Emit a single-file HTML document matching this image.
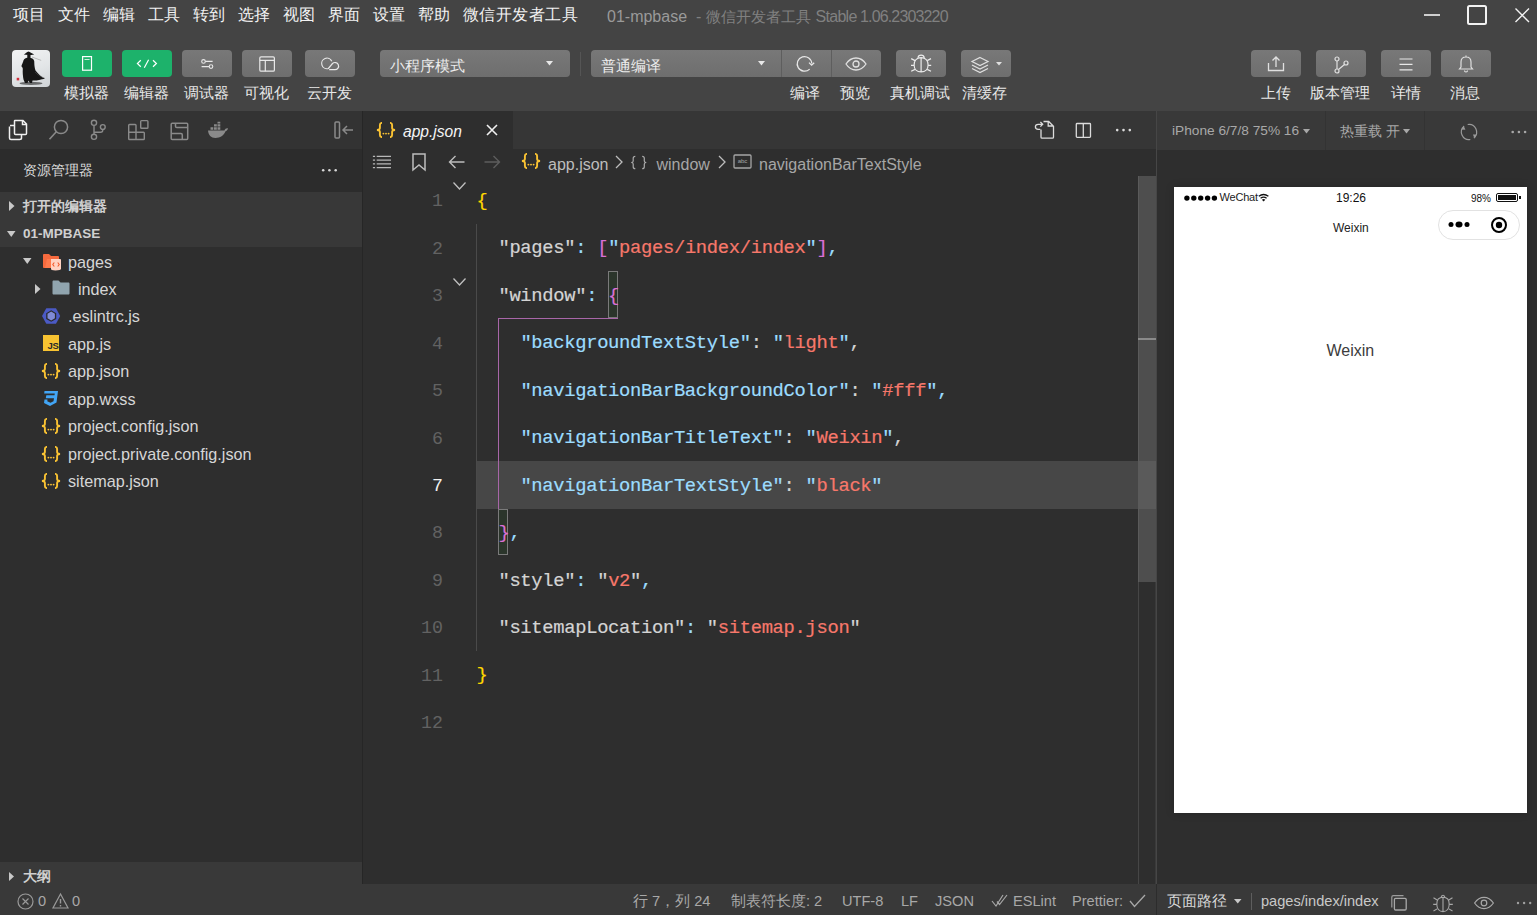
<!DOCTYPE html>
<html><head><meta charset="utf-8">
<style>
*{box-sizing:border-box;margin:0;padding:0}
html,body{width:1537px;height:915px;overflow:hidden;background:#2e2e2e;font-family:"Liberation Sans",sans-serif;color:#ccc}
.a{position:absolute}
svg{position:absolute;overflow:visible}
.menu{left:0;top:0;width:1537px;height:111px;background:#444}
.mi{top:0;line-height:30.5px;font-size:16px;letter-spacing:0.45px;color:#f2f2f2;white-space:nowrap}
.btn{top:50px;height:27px;width:50px;border-radius:4px;background:linear-gradient(#787878,#6e6e6e)}
.g{background:#1db26b}
.lbl{top:83px;line-height:20px;font-size:15.2px;color:#e8e8e8;white-space:nowrap}
.side{left:0;top:111px;width:362px;height:773px;background:#2e2e2e}
.status{left:0;top:884px;width:1537px;height:31px;background:#393939}
.editor{left:363px;top:111px;width:793px;height:773px;background:#2e2e2e}
.sim{left:1157px;top:111px;width:380px;height:773px;background:#2f2f2f}
.code{left:476.5px;padding-top:1.7px;font-family:"Liberation Mono",monospace;font-size:18.8px;letter-spacing:-0.304px;-webkit-text-stroke:0.2px currentColor;line-height:47.45px;height:47.45px;white-space:pre;color:#d4d4d4}
.ln{left:400px;padding-top:2px;width:43px;text-align:right;font-family:"Liberation Mono",monospace;font-size:18.28px;line-height:47.45px;color:#626262}
.k{color:#9cdcfe}.s{color:#f7786b}.p{color:#da70d6}.y{color:#ffd700}.w{color:#d4d4d4}
.f{left:68px;font-size:16.2px;line-height:27px;padding-top:1px;color:#d6d6d6;white-space:nowrap}
.st{top:884px;line-height:34px;font-size:14.6px;color:#a8a8a8;white-space:nowrap}
</style></head><body>
<svg width="0" height="0" style="position:absolute"><defs><symbol id="json" viewBox="0.5 0 19 16"><path d="M6 0.9C4.6 0.9 3.9 1.6 3.9 3V6C3.9 7.1 3.2 7.8 1 8C3.2 8.2 3.9 8.9 3.9 10V13C3.9 14.4 4.6 15.1 6 15.1M14 0.9C15.4 0.9 16.1 1.6 16.1 3V6C16.1 7.1 16.8 7.8 19 8C16.8 8.2 16.1 8.9 16.1 10V13C16.1 14.4 15.4 15.1 14 15.1" fill="none" stroke="#f9c233" stroke-width="1.9"/><circle cx="7.4" cy="11.6" r="0.95" fill="#f9c233"/><circle cx="10" cy="11.6" r="0.95" fill="#f9c233"/><circle cx="12.6" cy="11.6" r="0.95" fill="#f9c233"/></symbol></defs></svg>
<div class="a menu"></div>
<!-- menubar -->
<div class="a mi" style="left:13px">项目</div>
<div class="a mi" style="left:58px">文件</div>
<div class="a mi" style="left:103px">编辑</div>
<div class="a mi" style="left:148px">工具</div>
<div class="a mi" style="left:193px">转到</div>
<div class="a mi" style="left:238px">选择</div>
<div class="a mi" style="left:283px">视图</div>
<div class="a mi" style="left:328px">界面</div>
<div class="a mi" style="left:373px">设置</div>
<div class="a mi" style="left:418px">帮助</div>
<div class="a mi" style="left:463px">微信开发者工具</div>
<div class="a mi" style="left:607px;top:2px;font-size:16px;letter-spacing:0;color:#9a9a9a">01-mpbase</div>
<div class="a mi" style="left:696px;top:2px;font-size:16px;letter-spacing:0;color:#808080">-</div>
<div class="a mi" style="left:706px;top:2px;font-size:15px;letter-spacing:0;color:#808080">微信开发者工具</div>
<div class="a mi" style="left:815.5px;top:2px;font-size:16px;color:#808080;letter-spacing:-0.7px">Stable</div>
<div class="a mi" style="left:860px;top:2px;font-size:16px;color:#808080;letter-spacing:-0.85px">1.06.2303220</div>
<!-- window controls -->
<div class="a" style="left:1424px;top:14px;width:16px;height:2px;background:#cfcfcf"></div>
<div class="a" style="left:1467px;top:5px;width:20px;height:20px;border:2px solid #f2f2f2;border-radius:2.5px"></div>
<svg style="left:1514px;top:7px" width="17" height="17"><path d="M1.5 1.5L15 15M15 1.5L1.5 15" stroke="#f2f2f2" stroke-width="1.4"/></svg>

<!-- toolbar -->
<div class="a" style="left:12px;top:50px;width:38px;height:37px;border-radius:4px;background:linear-gradient(160deg,#f2f3f4 0%,#e2e5e7 55%,#cfd3d6 100%);overflow:hidden">
 <svg style="left:0;top:0" width="38" height="37" viewBox="0 0 38 37">
  <defs><filter id="ink" x="-20%" y="-20%" width="140%" height="140%"><feGaussianBlur stdDeviation="0.4"/></filter></defs>
  <g filter="url(#ink)">
  <ellipse cx="19" cy="33.4" rx="11.5" ry="1.6" fill="#1e1e1e" opacity="0.6"/>
  <path d="M11.8 4.6C13.5 3.6 15 2.2 16.5 1.6C18 2.2 19.6 3.6 22.2 4.4C19 5.2 14.5 5.3 11.8 4.6Z" fill="#161616"/>
  <rect x="15.3" y="4.6" width="3.2" height="3.8" fill="#161616"/>
  <path d="M15 7.8C13 8 11.5 9.5 11 12C10.5 14 9.3 15 9.5 16.5C10.2 17 10.8 17.5 10.8 19C10.6 22 10.8 26 11.5 29.5L13 33H15.5L16.5 30.5L18 33H20L20.5 30.5C22.5 30.8 25 30.5 27 30C29 29.5 31 29 33 28.7C30 27.5 26 24 23.5 20.5C22.5 18 22.3 14 22.2 11C21.8 9 19.5 7.8 17 7.8Z" fill="#141414"/>
  <path d="M23 22C25.5 25 29 27 32.5 28" stroke="#555" stroke-width="0.5" fill="none"/>
  </g>
  <path d="M20 7L29.2 10.4" stroke="#8a8a8a" stroke-width="0.5"/>
  <rect x="4.7" y="27.8" width="2.5" height="2.6" fill="#d2303c"/>
 </svg>
</div>
<div class="a btn g" style="left:62px"></div>
<svg style="left:0;top:0" width="200" height="100"><rect x="82.6" y="56.6" width="8.9" height="13.6" fill="none" stroke="#fff" stroke-width="1.2"/><path d="M84.5 59.5H89.6" stroke="#cfeede" stroke-width="1"/></svg>
<div class="a btn g" style="left:122px"></div>
<svg style="left:0;top:0" width="200" height="100"><path d="M140.8 60.2L137.4 63.5L140.8 66.8M153 60.2L156.4 63.5L153 66.8M148.6 59.8L144.3 67.8" fill="none" stroke="#fff" stroke-width="1.2"/></svg>
<div class="a btn" style="left:182px"></div>
<svg style="left:0;top:0" width="300" height="100"><path d="M205.3 61.4H212.6M201.6 66.6H209.2" stroke="#e8e8e8" stroke-width="1.1"/><circle cx="203.5" cy="61.4" r="1.8" fill="none" stroke="#e8e8e8" stroke-width="1.1"/><circle cx="211" cy="66.6" r="1.8" fill="none" stroke="#e8e8e8" stroke-width="1.1"/></svg>
<div class="a btn" style="left:242px"></div>
<svg style="left:0;top:0" width="300" height="100"><rect x="259.8" y="56.8" width="14.6" height="14.4" rx="1.3" fill="none" stroke="#e8e8e8" stroke-width="1.2"/><path d="M259.8 60.3H274.4M265.3 60.3V71.2" stroke="#e8e8e8" stroke-width="1.2"/></svg>
<div class="a btn" style="left:305px"></div>
<svg style="left:0;top:0" width="400" height="100"><path d="M331.8 61.2A5.3 5.3 0 1 0 328.4 68.5L332.5 63.5A3.6 3.6 0 1 1 335 69.7H329.2" fill="none" stroke="#e8e8e8" stroke-width="1.2"/></svg>
<div class="a lbl" style="left:64px">模拟器</div>
<div class="a lbl" style="left:124px">编辑器</div>
<div class="a lbl" style="left:184px">调试器</div>
<div class="a lbl" style="left:244px">可视化</div>
<div class="a lbl" style="left:307px">云开发</div>

<div class="a btn" style="left:380px;width:190px"></div>
<div class="a" style="left:390px;top:51.5px;line-height:28px;font-size:15px;color:#ececec">小程序模式</div>
<svg style="left:546px;top:61px" width="8" height="5"><path d="M0 0H7L3.5 4.5Z" fill="#e8e8e8"/></svg>
<div class="a" style="left:580px;top:52px;width:1px;height:24px;background:#555"></div>

<div class="a btn" style="left:591px;width:290px"></div>
<div class="a" style="left:781px;top:50px;width:1px;height:27px;background:#5e5e5e"></div>
<div class="a" style="left:831px;top:50px;width:1px;height:27px;background:#5e5e5e"></div>
<div class="a" style="left:601px;top:51.5px;line-height:28px;font-size:15px;color:#ececec">普通编译</div>
<svg style="left:758px;top:61px" width="8" height="5"><path d="M0 0H7L3.5 4.5Z" fill="#e8e8e8"/></svg>
<svg style="left:0;top:0" width="900" height="100"><path d="M809.66 69.06A7.3 7.3 0 1 1 811.8 63.6" fill="none" stroke="#e8e8e8" stroke-width="1.2"/><path d="M809 62.6L811.6 65.2L814.2 62.8" fill="none" stroke="#e8e8e8" stroke-width="1.3"/></svg>
<svg style="left:845px;top:57px" width="22" height="14"><path d="M1 7C4 2.5 7.5 1 11 1C14.5 1 18 2.5 21 7C18 11.5 14.5 13 11 13C7.5 13 4 11.5 1 7Z" fill="none" stroke="#e0e0e0" stroke-width="1.3"/><circle cx="11" cy="7" r="3" fill="none" stroke="#e0e0e0" stroke-width="1.3"/></svg>
<div class="a btn" style="left:896px"></div>
<svg style="left:0;top:0" width="1100" height="100"><path d="M918 57.8C918.2 56 919.3 55.2 921.1 55.2C922.9 55.2 924 56 924.3 57.8" fill="none" stroke="#ececec" stroke-width="1.2"/><path d="M921.1 57.6C925.3 57.6 928.1 60.6 928.1 65C928.1 69.3 925.2 71.9 921.1 71.9C917 71.9 914.1 69.3 914.1 65C914.1 60.6 916.9 57.6 921.1 57.6Z M921.1 57.6V71.9" fill="none" stroke="#ececec" stroke-width="1.2"/><path d="M915 60.6L911.2 58.6M927.2 60.6L931 58.6M914.1 65.3H911M928.1 65.3H931.2M915 69.4L911.2 71.2M927.2 69.4L931 71.2" fill="none" stroke="#ececec" stroke-width="1.2"/></svg>
<div class="a btn" style="left:961px"></div>
<svg style="left:970px;top:55.5px" width="20" height="18"><path d="M10 1.5L18 5.5L10 9.5L2 5.5Z M2 9L10 13L18 9 M2 12.5L10 16.5L18 12.5" fill="none" stroke="#e0e0e0" stroke-width="1.2"/></svg>
<svg style="left:996px;top:62px" width="6" height="4"><path d="M0 0H6L3 3.5Z" fill="#e0e0e0"/></svg>
<div class="a lbl" style="left:790px">编译</div>
<div class="a lbl" style="left:840px">预览</div>
<div class="a lbl" style="left:890px">真机调试</div>
<div class="a lbl" style="left:962px">清缓存</div>

<div class="a btn" style="left:1251px"></div>
<svg style="left:1267px;top:55px" width="18" height="17"><path d="M1.5 8V15.5H16.5V8M9 12V2M5.5 5.5L9 2L12.5 5.5" fill="none" stroke="#e0e0e0" stroke-width="1.3"/></svg>
<div class="a btn" style="left:1316px"></div>
<svg style="left:1333px;top:55.5px" width="18" height="18"><circle cx="4" cy="3" r="2" fill="none" stroke="#e0e0e0" stroke-width="1.2"/><circle cx="4" cy="15" r="2" fill="none" stroke="#e0e0e0" stroke-width="1.2"/><circle cx="13" cy="7" r="2" fill="none" stroke="#e0e0e0" stroke-width="1.2"/><path d="M4 5V13M11.5 8.5L5.5 13.5" fill="none" stroke="#e0e0e0" stroke-width="1.2"/></svg>
<div class="a btn" style="left:1381px"></div>
<svg style="left:1398px;top:57px" width="16" height="14"><path d="M1.5 2H14.5M1.5 7.4H14.5M1.5 12.8H14.5" stroke="#e8e8e8" stroke-width="1.2"/></svg>
<div class="a btn" style="left:1441px"></div>
<svg style="left:1458px;top:54px" width="16" height="19"><path d="M8 1.5V3M3 13V8C3 5 5 3 8 3C11 3 13 5 13 8V13L14.5 15H1.5Z M6.5 16.5C6.5 17.5 7.2 18 8 18C8.8 18 9.5 17.5 9.5 16.5" fill="none" stroke="#e0e0e0" stroke-width="1.2"/></svg>
<div class="a lbl" style="left:1261px">上传</div>
<div class="a lbl" style="left:1310px">版本管理</div>
<div class="a lbl" style="left:1391px">详情</div>
<div class="a lbl" style="left:1450px">消息</div>

<!-- sidebar -->
<div class="a side"></div>
<div class="a" style="left:0;top:111px;width:362px;height:38px;background:#333"></div>
<div class="a" style="left:0;top:149px;width:362px;height:43px;background:#2c2c2c"></div>
<div class="a" style="left:0;top:192px;width:362px;height:55px;background:#383838"></div>
<div class="a" style="left:0;top:862px;width:362px;height:22px;background:#393939"></div>
<div class="a" style="left:362px;top:111px;width:1px;height:773px;background:#262626"></div>

<svg style="left:0;top:111px" width="240" height="38" viewBox="0 111 240 38">
<path d="M10 125.5H19.5C20.5 125.5 21.5 126.5 21.5 127.5V138C21.5 139 20.5 139.5 19.5 139.5H11C10 139.5 9.5 139 9.5 138V126.5" fill="none" stroke="#f0f0f0" stroke-width="1.5"/>
<path d="M15 120.5H23L26.5 124V133.5C26.5 134.2 26 134.5 25.5 134.5H15.5C15 134.5 14.5 134.2 14.5 133.5V121C14.5 120.8 14.8 120.5 15 120.5Z M22.5 120.5V124.5H26.5" fill="#333" stroke="#f0f0f0" stroke-width="1.5"/>
<circle cx="61" cy="127" r="6.6" fill="none" stroke="#8a8a8a" stroke-width="1.5"/>
<path d="M56.3 131.8L49.5 139.3" stroke="#8a8a8a" stroke-width="1.6"/>
<circle cx="94" cy="122.8" r="2.6" fill="none" stroke="#8a8a8a" stroke-width="1.4"/>
<circle cx="94" cy="136.8" r="2.6" fill="none" stroke="#8a8a8a" stroke-width="1.4"/>
<circle cx="102.8" cy="127" r="2.4" fill="none" stroke="#8a8a8a" stroke-width="1.4"/>
<path d="M94 125.4V134.2M102.8 129.4V130C102.8 131.2 102 132.2 100.5 132.2H94" fill="none" stroke="#8a8a8a" stroke-width="1.4"/>
<path d="M129.5 124.5H135.2C135.6 124.5 136 124.9 136 125.3V132.2H143.5C143.9 132.2 144.3 132.6 144.3 133V138.7C144.3 139.1 143.9 139.5 143.5 139.5H129.5C129.1 139.5 128.7 139.1 128.7 138.7V125.3C128.7 124.9 129.1 124.5 129.5 124.5Z M128.7 132.2H136V139.5" fill="none" stroke="#8a8a8a" stroke-width="1.4"/>
<rect x="140.7" y="120.6" width="7.2" height="7.6" rx="0.8" fill="none" stroke="#8a8a8a" stroke-width="1.4"/>
<rect x="171.2" y="123.3" width="16.5" height="16.3" rx="1" fill="none" stroke="#8a8a8a" stroke-width="1.5"/>
<path d="M175.5 123.3V126.2C175.5 127 176 127.6 176.8 127.6H187.7 M171.2 133.6H181C181.8 133.6 182.3 134.2 182.3 135V139.6" fill="none" stroke="#8a8a8a" stroke-width="1.5"/>
<path d="M208 130.5H224.5C225 129 226.5 128 228 128.5C227.6 130 226.6 131 225.5 131.3C224 135.5 220 138 215.5 138C211 138 208.3 135 208 130.5Z" fill="#8a8a8a"/>
<path d="M210.5 127.2H213.3V129.8H210.5Z M214 127.2H216.8V129.8H214Z M217.5 127.2H220.3V129.8H217.5Z M214 124.2H216.8V126.6H214Z M217.5 124.2H220.3V126.6H217.5Z M217.5 121.8H220.3V123.6H217.5Z" fill="#8a8a8a"/>
</svg>
<svg style="left:334px;top:121px" width="20" height="18"><rect x="1" y="1" width="4.5" height="16" rx="1" fill="none" stroke="#8a8a8a" stroke-width="1.5"/><path d="M19 9H9M13 5L9 9L13 13" fill="none" stroke="#8a8a8a" stroke-width="1.5"/></svg>

<div class="a" style="left:23px;top:160px;font-size:14px;line-height:21px;color:#dcdcdc">资源管理器</div>
<svg style="left:0;top:0" width="400" height="200"><circle cx="323.2" cy="170.2" r="1.25" fill="#d8d8d8"/><circle cx="329.4" cy="170.2" r="1.25" fill="#d8d8d8"/><circle cx="335.7" cy="170.2" r="1.25" fill="#d8d8d8"/></svg>

<svg style="left:9px;top:201px" width="6" height="10"><path d="M0 0L5.5 5L0 10Z" fill="#c8c8c8"/></svg>
<div class="a" style="left:23px;top:196px;font-size:14px;line-height:21px;font-weight:bold;color:#d0d0d0">打开的编辑器</div>
<svg style="left:7px;top:231px" width="9" height="6"><path d="M0 0H8.5L4.25 6Z" fill="#c8c8c8"/></svg>
<div class="a" style="left:23px;top:223px;font-size:13.5px;line-height:21px;font-weight:bold;color:#d0d0d0">01-MPBASE</div>

<!-- tree -->
<svg style="left:23px;top:258px" width="9" height="6"><path d="M0 0H8.5L4.25 6Z" fill="#c8c8c8"/></svg>
<svg style="left:42px;top:253px" width="20" height="18"><path d="M1 2C1 1.5 1.5 1 2 1H7L9 3H16C16.5 3 17 3.5 17 4V15H2C1.5 15 1 14.5 1 14Z" fill="#f66a3e"/><path d="M3 15L5 6H17V15Z" fill="#ff7a4c"/><path d="M9 6H18C18.5 6 19 6.5 19 7V16C19 16.5 17 17.5 13.5 17.5C10 17.5 9 16.5 9 16Z" fill="#ffd2c2"/><path d="M12.3 9.5L10.8 11.5L12.3 13.5M15.7 9.5L17.2 11.5L15.7 13.5" fill="none" stroke="#f25a2c" stroke-width="1.1"/></svg>
<div class="a f" style="top:248px">pages</div>
<svg style="left:35px;top:284px" width="6" height="10"><path d="M0 0L5.5 5L0 10Z" fill="#c8c8c8"/></svg>
<svg style="left:52px;top:280px" width="18" height="15"><path d="M0.5 1.5C0.5 1 1 0.5 1.5 0.5H6.5L8.5 2.5H16.5C17 2.5 17.5 3 17.5 3.5V13.5C17.5 14 17 14.5 16.5 14.5H1.5C1 14.5 0.5 14 0.5 13.5Z" fill="#90a4ae"/></svg>
<div class="a f" style="top:275px;left:78px">index</div>

<svg style="left:42px;top:308px" width="19" height="16" viewBox="0 0 19 16"><path d="M4.3 0.3H14L18.2 8L14 15.7H4.3L0 8Z" fill="#4b5ac4"/><path d="M9.2 2.3L14.2 5.2V11L9.2 13.8L4.2 11V5.2Z" fill="#2a2a2a"/><path d="M9.2 3.6L12.9 5.8V10.3L9.2 12.5L5.5 10.3V5.8Z" fill="#7f8ad6"/></svg>
<div class="a f" style="top:302px">.eslintrc.js</div>
<div class="a" style="left:43px;top:335px;width:16px;height:16px;background:#f8c331"></div>
<div class="a" style="left:47.5px;top:340px;font-size:9.5px;line-height:12px;font-weight:bold;color:#2a2a2a;letter-spacing:-0.3px">JS</div>
<div class="a f" style="top:330px">app.js</div>
<svg style="left:41px;top:363px" width="20" height="16"><use href="#json"/></svg>
<div class="a f" style="top:357px">app.json</div>
<svg style="left:42px;top:390px" width="18" height="17"><path d="M2.5 1H16L14.5 12.5L8 16L2 13L2.5 9.5H5.5L5.3 11.3L8.5 12.8L11.5 11.3L12 8.2H3.8L4.3 5.2H12.5L12.8 3.5H2.2Z" fill="#42a5f5"/></svg>
<div class="a f" style="top:385px">app.wxss</div>
<svg style="left:41px;top:418px" width="20" height="16"><use href="#json"/></svg>
<div class="a f" style="top:412px">project.config.json</div>
<svg style="left:41px;top:446px" width="20" height="16"><use href="#json"/></svg>
<div class="a f" style="top:440px">project.private.config.json</div>
<svg style="left:41px;top:473px" width="20" height="16"><use href="#json"/></svg>
<div class="a f" style="top:467px">sitemap.json</div>

<svg style="left:9px;top:872px" width="6" height="9"><path d="M0 0L5 4.5L0 9Z" fill="#c8c8c8"/></svg>
<div class="a" style="left:23px;top:866px;font-size:14px;line-height:20px;font-weight:bold;color:#d0d0d0">大纲</div>

<!-- editor -->
<div class="a" style="left:363px;top:111px;width:793px;height:38px;background:#363636"></div>
<div class="a" style="left:363px;top:111px;width:150px;height:38px;background:#2e2e2e"></div>
<svg style="left:376px;top:122px" width="20" height="16"><use href="#json"/></svg>
<div class="a" style="left:403px;top:120.5px;font-size:15.6px;line-height:22px;font-style:italic;color:#f4f4f4">app.json</div>
<svg style="left:486px;top:124.3px" width="12" height="12"><path d="M1 1L11 11M11 1L1 11" stroke="#f0f0f0" stroke-width="1.6"/></svg>
<svg style="left:0;top:0" width="1537" height="915"><path d="M1041 129.5V137.2C1041 137.8 1041.4 138.2 1042 138.2H1052.5C1053.1 138.2 1053.5 137.8 1053.5 137.2V126.3L1048.7 121.5H1043.5M1048.2 121.5V126H1053.5" fill="none" stroke="#dcdcdc" stroke-width="1.3"/>
<path d="M1040.3 129.3H1038.2C1036.6 129.3 1035.4 128.2 1035.4 126.8C1035.4 125.4 1036.6 124.3 1038.2 124.3H1042.6M1040.4 122L1042.7 124.3L1040.4 126.6" fill="none" stroke="#dcdcdc" stroke-width="1.3"/>
<rect x="1076.3" y="123.5" width="14.2" height="13.8" rx="0.8" fill="none" stroke="#dcdcdc" stroke-width="1.3"/><path d="M1083.3 123.5V137.3" stroke="#dcdcdc" stroke-width="1.3"/>
<circle cx="1117.2" cy="130.1" r="1.3" fill="#dcdcdc"/><circle cx="1123.5" cy="130.1" r="1.3" fill="#dcdcdc"/><circle cx="1129.8" cy="130.1" r="1.3" fill="#dcdcdc"/></svg>

<!-- breadcrumb -->
<svg style="left:0;top:0" width="600" height="200"><path d="M372.9 156.4H375.1M376.7 156.4H391M372.9 160.1H375.1M376.7 160.1H391M372.9 163.8H375.1M376.7 163.8H391M372.9 167.6H375.1M376.7 167.6H391" stroke="#b8b8b8" stroke-width="1.15"/></svg>
<svg style="left:412px;top:153px" width="15" height="18"><path d="M1 1H13V17L7 12L1 17Z" fill="none" stroke="#bdbdbd" stroke-width="1.5"/></svg>
<svg style="left:448px;top:155px" width="17" height="14"><path d="M16.5 7H1.5M7.5 1L1.5 7L7.5 13" fill="none" stroke="#bdbdbd" stroke-width="1.4"/></svg>
<svg style="left:484px;top:155px" width="17" height="14"><path d="M0.5 7H15.5M9.5 1L15.5 7L9.5 13" fill="none" stroke="#5d5d5d" stroke-width="1.4"/></svg>
<svg style="left:521px;top:153px" width="20" height="16"><use href="#json"/></svg>
<div class="a" style="left:548px;top:152.5px;font-size:16px;line-height:24px;color:#bdbdbd;white-space:nowrap">app.json</div>
<svg style="left:615px;top:155px" width="8" height="14"><path d="M1 1L7 7L1 13" fill="none" stroke="#bdbdbd" stroke-width="1.3"/></svg>
<svg style="left:0;top:0" width="700" height="200"><path d="M635.3 156.3C633.8 156.3 633.2 157 633.2 158.3V160.9C633.2 161.8 632.6 162.3 631.3 162.5C632.6 162.7 633.2 163.2 633.2 164.1V166.7C633.2 168 633.8 168.7 635.3 168.7M642.2 156.3C643.7 156.3 644.3 157 644.3 158.3V160.9C644.3 161.8 644.9 162.3 646.2 162.5C644.9 162.7 644.3 163.2 644.3 164.1V166.7C644.3 168 643.7 168.7 642.2 168.7" fill="none" stroke="#ababab" stroke-width="1.2"/></svg>
<div class="a" style="left:656.5px;top:152.5px;font-size:16px;line-height:24px;color:#a6a6a6;white-space:nowrap">window</div>
<svg style="left:718px;top:155px" width="8" height="14"><path d="M1 1L7 7L1 13" fill="none" stroke="#bdbdbd" stroke-width="1.3"/></svg>
<svg style="left:733px;top:154px" width="19" height="15"><rect x="1" y="1" width="17" height="13" rx="1" fill="none" stroke="#a6a6a6" stroke-width="1.3"/><text x="9.5" y="9" font-size="6" text-anchor="middle" fill="#a6a6a6" font-family="Liberation Sans">abc</text></svg>
<div class="a" style="left:759px;top:152.5px;font-size:16px;line-height:24px;color:#a6a6a6;white-space:nowrap">navigationBarTextStyle</div>

<!-- code area -->
<div class="a" style="left:476px;top:461px;width:680px;height:48px;background:#474747"></div>
<div class="a" style="left:476px;top:224px;width:1px;height:427px;background:#4a4a4a"></div>
<!-- bracket guide -->
<div class="a" style="left:608px;top:271px;width:10px;height:47px;border:1px solid #7a7a7a;background:#2b352b"></div>
<div class="a" style="left:498px;top:318px;width:120px;height:1px;background:#a866a8"></div>
<div class="a" style="left:498px;top:318px;width:1px;height:191px;background:#a866a8"></div>
<div class="a" style="left:498px;top:509px;width:10px;height:46px;border:1px solid #7a7a7a;background:#2b352b"></div>

<svg style="left:453px;top:182px" width="13" height="8"><path d="M0.5 0.5L6.5 7L12.5 0.5" fill="none" stroke="#c0c0c0" stroke-width="1.3"/></svg>
<svg style="left:453px;top:278px" width="13" height="8"><path d="M0.5 0.5L6.5 7L12.5 0.5" fill="none" stroke="#c0c0c0" stroke-width="1.3"/></svg>

<div class="a ln" style="top:176.3px">1</div>
<div class="a ln" style="top:223.75px">2</div>
<div class="a ln" style="top:271.2px">3</div>
<div class="a ln" style="top:318.65px">4</div>
<div class="a ln" style="top:366.1px">5</div>
<div class="a ln" style="top:413.55px">6</div>
<div class="a ln" style="top:461px;color:#f0f0f0">7</div>
<div class="a ln" style="top:508.45px">8</div>
<div class="a ln" style="top:555.9px">9</div>
<div class="a ln" style="top:603.35px">10</div>
<div class="a ln" style="top:650.8px">11</div>
<div class="a ln" style="top:698.25px">12</div>

<div class="a code" style="top:176.3px"><span class="y">{</span></div>
<div class="a code" style="top:223.75px">  <span class="w">"pages"</span><span class="k">:</span> <span class="p">[</span><span class="k">"</span><span class="s">pages/index/index</span><span class="k">"</span><span class="p">]</span><span class="k">,</span></div>
<div class="a code" style="top:271.2px">  <span class="w">"window"</span><span class="k">:</span> <span class="p">{</span></div>
<div class="a code" style="top:318.65px">    <span class="k">"backgroundTextStyle"</span><span class="w">:</span> <span class="k">"</span><span class="s">light</span><span class="k">"</span><span class="w">,</span></div>
<div class="a code" style="top:366.1px">    <span class="k">"navigationBarBackgroundColor"</span><span class="w">:</span> <span class="k">"</span><span class="s">#fff</span><span class="k">"</span><span class="k">,</span></div>
<div class="a code" style="top:413.55px">    <span class="k">"navigationBarTitleText"</span><span class="w">:</span> <span class="k">"</span><span class="s">Weixin</span><span class="k">"</span><span class="w">,</span></div>
<div class="a code" style="top:461px">    <span class="k">"navigationBarTextStyle"</span><span class="w">:</span> <span class="k">"</span><span class="s">black</span><span class="k">"</span></div>
<div class="a code" style="top:508.45px">  <span class="p">}</span><span class="k">,</span></div>
<div class="a code" style="top:555.9px">  <span class="w">"style"</span><span class="k">:</span> <span class="w">"</span><span class="s">v2</span><span class="w">"</span><span class="k">,</span></div>
<div class="a code" style="top:603.35px">  <span class="w">"sitemapLocation"</span><span class="k">:</span> <span class="w">"</span><span class="s">sitemap.json</span><span class="w">"</span></div>
<div class="a code" style="top:650.8px"><span class="y">}</span></div>

<!-- scrollbar -->
<div class="a" style="left:1138px;top:176px;width:18px;height:708px;background:#2e2e2e;border-left:1px solid #464646;border-right:1px solid #3a3a3a"></div>
<div class="a" style="left:1138px;top:176px;width:18px;height:406px;background:#4e4e4e;border-left:1px solid #5a5a5a"></div>
<div class="a" style="left:1138px;top:338px;width:18px;height:2px;background:#8a8a8a"></div>
<div class="a" style="left:1138px;top:461px;width:18px;height:48px;background:#5a5a5a"></div>

<!-- simulator -->
<div class="a" style="left:1156px;top:111px;width:1px;height:804px;background:#464646"></div>
<div class="a" style="left:1157px;top:111px;width:380px;height:39px;background:#393939"></div>
<div class="a" style="left:1325px;top:111px;width:1px;height:39px;background:#333"></div>
<div class="a" style="left:1424px;top:111px;width:1px;height:39px;background:#333"></div>
<div class="a" style="left:1172px;top:121px;font-size:13.7px;line-height:20px;color:#a8a8a8;white-space:nowrap">iPhone 6/7/8 75% 16</div>
<svg style="left:1303px;top:129px" width="7" height="5"><path d="M0 0H7L3.5 4.5Z" fill="#a8a8a8"/></svg>
<div class="a" style="left:1340px;top:121px;font-size:14px;line-height:20px;color:#a8a8a8;white-space:nowrap">热重载 开</div>
<svg style="left:1403px;top:129px" width="7" height="5"><path d="M0 0H7L3.5 4.5Z" fill="#a8a8a8"/></svg>
<svg style="left:0;top:0" width="1537" height="915"><path d="M1467.68 124.52A7.6 7.6 0 0 1 1473.89 137.82M1470.32 139.48A7.6 7.6 0 0 1 1464.11 126.18" fill="none" stroke="#9a9a9a" stroke-width="1.2"/><path d="M1472.9 134.6L1476.7 134.4L1474.7 138.7Z M1461.6 129.6L1465.4 129.8L1463.5 125.4Z" fill="#9a9a9a"/>
<circle cx="1512.7" cy="132" r="1.3" fill="#a8a8a8"/><circle cx="1518.9" cy="132" r="1.3" fill="#a8a8a8"/><circle cx="1525.1" cy="132" r="1.3" fill="#a8a8a8"/></svg>

<div class="a" style="left:1174px;top:187px;width:353px;height:626px;background:#fff;box-shadow:0 0 8px rgba(0,0,0,0.22)"></div>
<svg style="left:0;top:0" width="1537" height="915"><circle cx="1186.9" cy="198.1" r="2.7" fill="#000"/><circle cx="1193.8" cy="198.1" r="2.7" fill="#000"/><circle cx="1200.7" cy="198.1" r="2.7" fill="#000"/><circle cx="1207.6" cy="198.1" r="2.7" fill="#000"/><circle cx="1214.4" cy="198.1" r="2.7" fill="#000"/>
<path d="M1258.8 196.3A8 8 0 0 1 1268.4 196.3M1260.6 198.2A5 5 0 0 1 1266.6 198.2" fill="none" stroke="#111" stroke-width="1.3"/><path d="M1261.9 199.7A2.6 2.6 0 0 1 1265.3 199.7L1263.6 201.6Z" fill="#111"/></svg>
<div class="a" style="left:1219.5px;top:189.8px;font-size:11px;line-height:14px;color:#222;white-space:nowrap;letter-spacing:-0.2px">WeChat</div>
<div class="a" style="left:1336px;top:190px;font-size:12px;line-height:16px;color:#111">19:26</div>
<div class="a" style="left:1471px;top:192px;font-size:10px;line-height:14px;color:#111">98%</div>
<div class="a" style="left:1496px;top:193px;width:22px;height:9px;border:1px solid #111;border-radius:2px;padding:1px"><div style="width:100%;height:100%;background:#111"></div></div>
<div class="a" style="left:1518.5px;top:196px;width:2px;height:3px;background:#111"></div>
<div class="a" style="left:1333px;top:220px;font-size:12px;line-height:16px;color:#222">Weixin</div>
<div class="a" style="left:1438px;top:209.5px;width:82px;height:30px;border:1px solid #e2e2e2;border-radius:15px;background:#fff"></div>
<svg style="left:1448px;top:221px" width="22" height="7"><circle cx="3" cy="3.5" r="2.5" fill="#000"/><ellipse cx="11" cy="3.5" rx="3.5" ry="3" fill="#000"/><circle cx="19" cy="3.5" r="2.5" fill="#000"/></svg>
<svg style="left:1490px;top:216px" width="18" height="18"><circle cx="9" cy="9" r="7" fill="none" stroke="#000" stroke-width="2"/><circle cx="9" cy="9" r="3.2" fill="#000"/></svg>
<div class="a" style="left:1326.5px;top:341px;font-size:16px;line-height:20px;color:#3c3c3c">Weixin</div>

<!-- status bar -->
<div class="a status"></div>
<div class="a" style="left:1156px;top:884px;width:1px;height:31px;background:#2c2c2c"></div>
<svg style="left:17px;top:893px" width="17" height="17"><circle cx="8.5" cy="8.5" r="7.5" fill="none" stroke="#9a9a9a" stroke-width="1.2"/><path d="M5.5 5.5L11.5 11.5M11.5 5.5L5.5 11.5" stroke="#9a9a9a" stroke-width="1.2"/></svg>
<div class="a st" style="left:38px">0</div>
<svg style="left:52px;top:893px" width="17" height="16"><path d="M8.5 1L16 15H1Z" fill="none" stroke="#9a9a9a" stroke-width="1.2"/><path d="M8.5 6V10.5M8.5 12V13.5" stroke="#9a9a9a" stroke-width="1.4"/></svg>
<div class="a st" style="left:72px">0</div>
<div class="a st" style="left:633px">行 7，列 24</div>
<div class="a st" style="left:731px">制表符长度: 2</div>
<div class="a st" style="left:842px">UTF-8</div>
<div class="a st" style="left:901px">LF</div>
<div class="a st" style="left:935px">JSON</div>
<svg style="left:991px;top:894px" width="19" height="14"><path d="M1 7L5 12L12 1M6 7.5L8.5 10.5L16 1" fill="none" stroke="#a8a8a8" stroke-width="1.2"/></svg>
<div class="a st" style="left:1013px">ESLint</div>
<div class="a st" style="left:1072px">Prettier:</div>
<svg style="left:1129px;top:894px" width="17" height="14"><path d="M1 7L5.5 12.5L16 1" fill="none" stroke="#a8a8a8" stroke-width="1.3"/></svg>
<div class="a st" style="left:1167px;color:#d8d8d8">页面路径</div>
<svg style="left:1234px;top:899px" width="8" height="5"><path d="M0 0H7.5L3.75 4.5Z" fill="#c8c8c8"/></svg>
<div class="a" style="left:1251px;top:893px;width:1px;height:17px;background:#5e5e5e"></div>
<div class="a st" style="left:1261px;color:#c8c8c8">pages/index/index</div>
<svg style="left:0;top:0" width="1537" height="915"><path d="M1391.8 907.5V897.2C1391.8 896.3 1392.4 895.7 1393.3 895.7H1403.5" fill="none" stroke="#9c9c9c" stroke-width="1.2"/><rect x="1394.4" y="898.4" width="11.8" height="11.6" rx="1.2" fill="none" stroke="#a8a8a8" stroke-width="1.3"/>
<path d="M1441 897.6C1441.3 896 1442 895.3 1443 895.3C1444 895.3 1444.7 896 1445 897.6" fill="none" stroke="#a8a8a8" stroke-width="1.1"/>
<path d="M1443 897.3C1446.8 897.3 1449.2 900 1449.2 904.2C1449.2 908.8 1446.5 911.6 1443 911.6C1439.5 911.6 1436.8 908.8 1436.8 904.2C1436.8 900 1439.2 897.3 1443 897.3Z M1443 897.3V911.6" fill="none" stroke="#a8a8a8" stroke-width="1.1"/>
<path d="M1437.6 900.2L1433.5 897.8M1448.4 900.2L1452.5 897.8M1436.8 904.4H1433.2M1449.2 904.4H1452.8M1437.6 908.6L1433.5 911M1448.4 908.6L1452.5 911" fill="none" stroke="#a8a8a8" stroke-width="1.1"/>
<path d="M1474.6 903C1477.5 898.8 1480.5 897.3 1484 897.3C1487.5 897.3 1490.5 898.8 1493.4 903C1490.5 907.2 1487.5 908.7 1484 908.7C1480.5 908.7 1477.5 907.2 1474.6 903Z" fill="none" stroke="#a8a8a8" stroke-width="1.2"/><circle cx="1484" cy="903" r="2.8" fill="none" stroke="#a8a8a8" stroke-width="1.2"/>
<circle cx="1518" cy="903" r="1.2" fill="#a0a0a0"/><circle cx="1524.1" cy="903" r="1.2" fill="#a0a0a0"/><circle cx="1530.2" cy="903" r="1.2" fill="#a0a0a0"/>
</svg>
</body></html>
